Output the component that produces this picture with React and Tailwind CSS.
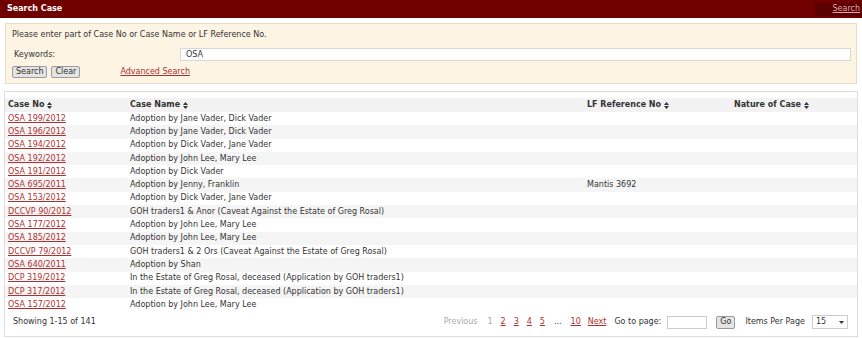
import React from 'react';

const rows = [
  ['OSA 199/2012', 'Adoption by Jane Vader, Dick Vader', ''],
  ['OSA 196/2012', 'Adoption by Jane Vader, Dick Vader', ''],
  ['OSA 194/2012', 'Adoption by Dick Vader, Jane Vader', ''],
  ['OSA 192/2012', 'Adoption by John Lee, Mary Lee', ''],
  ['OSA 191/2012', 'Adoption by Dick Vader', ''],
  ['OSA 695/2011', 'Adoption by Jenny, Franklin', 'Mantis 3692'],
  ['OSA 153/2012', 'Adoption by Dick Vader, Jane Vader', ''],
  ['DCCVP 90/2012', 'GOH traders1 & Anor (Caveat Against the Estate of Greg Rosal)', ''],
  ['OSA 177/2012', 'Adoption by John Lee, Mary Lee', ''],
  ['OSA 185/2012', 'Adoption by John Lee, Mary Lee', ''],
  ['DCCVP 79/2012', 'GOH traders1 & 2 Ors (Caveat Against the Estate of Greg Rosal)', ''],
  ['OSA 640/2011', 'Adoption by Shan', ''],
  ['DCP 319/2012', 'In the Estate of Greg Rosal, deceased (Application by GOH traders1)', ''],
  ['DCP 317/2012', 'In the Estate of Greg Rosal, deceased (Application by GOH traders1)', ''],
  ['OSA 157/2012', 'Adoption by John Lee, Mary Lee', ''],
];

const SortIcon = () => (
  <svg width="5" height="7" viewBox="0 0 5 7" className="ml-[3px] inline-block">
    <path d="M0 3 L2.5 0 L5 3 Z M0 4 L2.5 7 L5 4 Z" fill="#333" />
  </svg>
);

const gridCols = 'grid grid-cols-[122px_457px_147px_1fr]';

export default function App() {
  return (
    <div className="w-[862px] h-[338px] bg-white text-[8px] text-[#333] font-['DejaVu_Sans',sans-serif] overflow-hidden">
      {/* title bar */}
      <div className="h-[18px] bg-[#700000] flex items-center justify-between">
        <span className="pl-[7px] text-white font-bold">Search Case</span>
        <span className="h-[13px] w-[47px] bg-[#5a0000] flex items-center justify-end pr-[2px] text-[#e0a8a8] underline">Search</span>
      </div>

      {/* search panel */}
      <div className="mx-[5px] mt-[5px] h-[61px] bg-[#fdf4e4] border border-[#e8dcc8] px-[6px] pt-[5px]">
        <div>Please enter part of Case No or Case Name or LF Reference No.</div>
        <div className="flex items-center mt-[7px]">
          <span className="w-[168px] pl-[2px]">Keywords:</span>
          <div className="flex-1 h-[13px] bg-white border border-[#d8d8d8] flex items-center pl-[5px] mr-[-1px]">OSA</div>
        </div>
        <div className="flex items-center mt-[5px]">
          <button className="h-[12px] px-[3px] bg-[#e4e4e4] border border-[#9a9a9a] rounded-[2px] leading-none">Search</button>
          <button className="ml-[4px] h-[12px] px-[3px] bg-[#e4e4e4] border border-[#9a9a9a] rounded-[2px] leading-none">Clear</button>
          <span className="ml-[40px] text-[#b03030] underline">Advanced Search</span>
        </div>
      </div>

      {/* results */}
      <div className="mx-[4px] mt-[7px] h-[246px] border border-[#dcdcdc] pt-[6px] flex flex-col">
        <div className={`${gridCols} h-[14px] items-center bg-[#f2f2f2] font-bold px-[3px]`}>
          <span className="flex items-center">Case No<SortIcon /></span>
          <span className="flex items-center">Case Name<SortIcon /></span>
          <span className="flex items-center">LF Reference No<SortIcon /></span>
          <span className="flex items-center">Nature of Case<SortIcon /></span>
        </div>
        {rows.map((r, i) => (
          <div key={i} className={`${gridCols} h-[13.3px] items-center px-[3px] ${i % 2 === 1 ? 'bg-[#f5f5f5]' : 'bg-white'}`}>
            <span className="text-[#b03030] underline">{r[0]}</span>
            <span className="whitespace-nowrap">{r[1]}</span>
            <span>{r[2]}</span>
            <span></span>
          </div>
        ))}
        <div className="flex items-center justify-between mt-[4px] pl-[8px] pr-[9px]">
          <span>Showing 1-15 of 141</span>
          <div className="flex items-center">
            <span className="text-[#aaa]">Previous</span>
            <span className="ml-[10px] text-[#aaa]">1</span>
            <span className="ml-[8px] text-[#b03030] underline">2</span>
            <span className="ml-[8px] text-[#b03030] underline">3</span>
            <span className="ml-[8px] text-[#b03030] underline">4</span>
            <span className="ml-[8px] text-[#b03030] underline">5</span>
            <span className="ml-[9px]">...</span>
            <span className="ml-[9px] text-[#b03030] underline">10</span>
            <span className="ml-[7px] text-[#b03030] underline">Next</span>
            <span className="ml-[8px]">Go to page:</span>
            <span className="ml-[6px] w-[40px] h-[13px] border border-[#ccc] bg-white"></span>
            <button className="ml-[9px] h-[13px] px-[3px] bg-[#e4e4e4] border border-[#9a9a9a] rounded-[2px] leading-none">Go</button>
            <span className="ml-[10px]">Items Per Page</span>
            <span className="ml-[7px] w-[36px] h-[14px] border border-[#ccc] bg-white flex items-center justify-between px-[3px]">
              <span>15</span>
              <svg width="5" height="3" viewBox="0 0 5 3"><path d="M0 0 L5 0 L2.5 3 Z" fill="#333" /></svg>
            </span>
          </div>
        </div>
      </div>
    </div>
  );
}
